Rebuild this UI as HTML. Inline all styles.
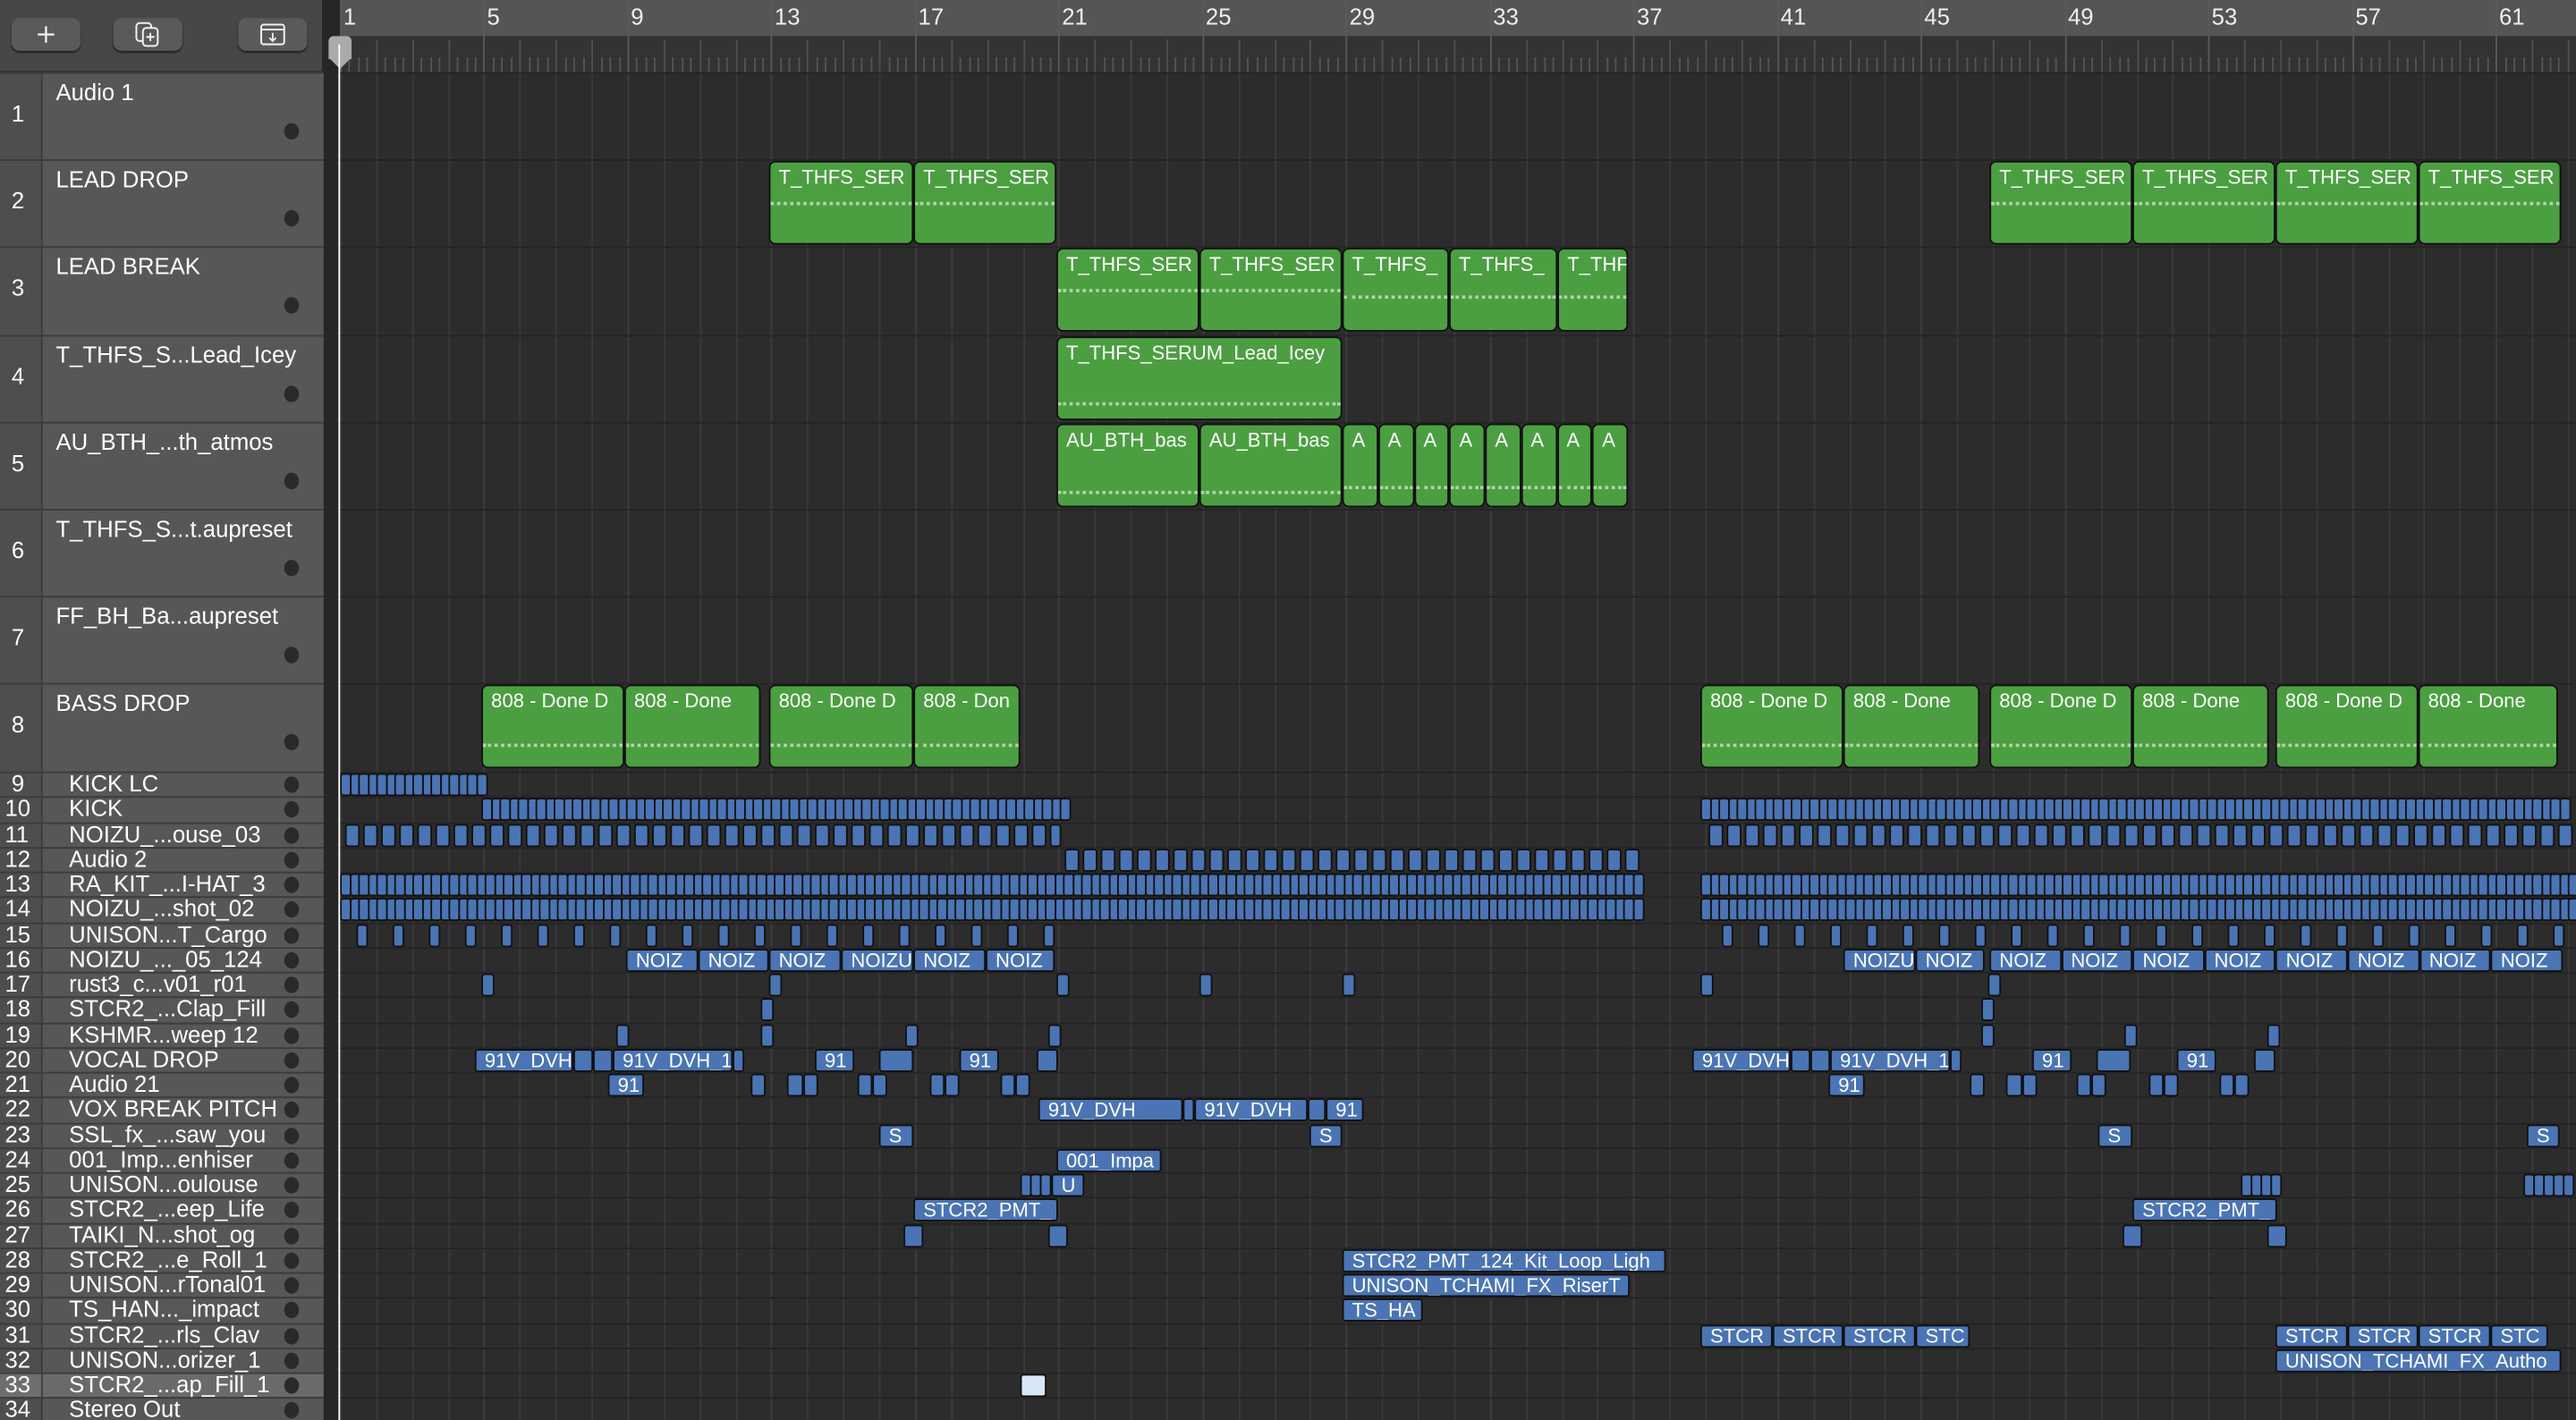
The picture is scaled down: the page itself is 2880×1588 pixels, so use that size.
<!DOCTYPE html>
<html><head><meta charset="utf-8">
<style>
html,body{margin:0;padding:0;background:#2c2c2c;overflow:hidden;width:2880px;height:1588px}
#w{position:absolute;left:0;top:0;width:1568px;height:865px;transform-origin:0 0;transform:scale(1.83673,1.83584);background:#2c2c2c;font-family:"Liberation Sans",sans-serif;color:#fff;overflow:hidden}
.a{position:absolute;box-sizing:border-box}
.g{background:#4b9f41;border:1px solid #111;border-radius:4px;overflow:hidden;font-size:12px;line-height:14px;padding:2px 0 0 5px;white-space:nowrap}
.b{background:#4a74b4;border:1px solid #111;border-radius:2px;overflow:hidden;font-size:12px;line-height:12px;padding-left:5px;white-space:nowrap}
.n{font-size:14px}
.dot{position:absolute;width:9px;height:10px;border-radius:50%;background:#2a2a2a}
.btn{position:absolute;top:11px;width:42px;height:20px;background:#5a5a5a;border-radius:5px;box-shadow:0 1px 1px #222}
</style></head><body><div id="w">
<div class="a" style="left:0;top:0;width:197px;height:44px;background:#474747;border-bottom:1px solid #333"></div>
<div class="btn" style="left:7px"><svg width="42" height="20"><path d="M21 5v10M16 10h10" stroke="#eee" stroke-width="1.3"/></svg></div>
<div class="btn" style="left:69px"><svg width="42" height="20"><rect x="14" y="3" width="9" height="11" rx="2" fill="none" stroke="#eee" stroke-width="1.1"/><rect x="18" y="6" width="9" height="11" rx="2" fill="#5a5a5a" stroke="#eee" stroke-width="1.1"/><path d="M22.5 9v5M20 11.5h5" stroke="#eee" stroke-width="1.1"/></svg></div>
<div class="btn" style="left:145px"><svg width="42" height="20"><rect x="14" y="4" width="14" height="12" rx="1.5" fill="none" stroke="#eee" stroke-width="1.1"/><path d="M14 7h14M21 9v5M19 12l2 2 2-2" stroke="#eee" stroke-width="1" fill="none"/></svg></div>
<div class="a" style="left:197px;top:0;width:1371px;height:22px;background:#555"></div>
<div class="a" style="left:197px;top:22px;width:1371px;height:22px;background:#333"></div>
<div class="a" style="left:196px;top:0;width:11px;height:865px;background:#262626"></div>
<div id="c"></div>
<div class="a" style="left:200px;top:22px;width:14px;height:14px;background:#aaa;border-radius:3px 3px 0 0"></div>
<div class="a" style="left:200px;top:35px;width:0;height:0;border-left:7px solid transparent;border-right:7px solid transparent;border-top:7px solid #aaa"></div>
<div class="a" style="left:206px;top:27px;width:1px;height:838px;background:#fff"></div>
</div>
<script>
var c=document.getElementById('c'),h='';
function X(b){return 207+(b-1)*21.87}
function A(s){h+=s}
for(var b=1;b<=63;b++){var x=X(b);
 A('<div class="a" style="left:'+x+'px;top:'+(b%4==1?0:24)+'px;width:1px;height:'+(b%4==1?865:20)+'px;background:'+(b%4==1?'#5a5a5a':'#505050')+'"></div>');
 for(var k=1;k<4;k++)A('<div class="a" style="left:'+(x+k*5.47)+'px;top:35px;width:1px;height:9px;background:#555"></div>');
 if(b%4==1)A('<div class="a" style="left:'+(x+2)+'px;top:2px;font-size:14px;color:#eee">'+b+'</div>');
 A('<div class="a" style="left:'+x+'px;top:44px;width:1px;height:821px;background:#3a3a3a"></div>');
}
var names=["Audio 1","LEAD DROP","LEAD BREAK","T_THFS_S...Lead_Icey","AU_BTH_...th_atmos","T_THFS_S...t.aupreset","FF_BH_Ba...aupreset","BASS DROP","KICK LC","KICK","NOIZU_...ouse_03","Audio 2","RA_KIT_...I-HAT_3","NOIZU_...shot_02","UNISON...T_Cargo","NOIZU_..._05_124","rust3_c...v01_r01","STCR2_...Clap_Fill","KSHMR...weep 12","VOCAL DROP","Audio 21","VOX BREAK PITCH","SSL_fx_...saw_you","001_Imp...enhiser","UNISON...oulouse","STCR2_...eep_Life","TAIKI_N...shot_og","STCR2_...e_Roll_1","UNISON...rTonal01","TS_HAN..._impact","STCR2_...rls_Clav","UNISON...orizer_1","STCR2_...ap_Fill_1","Stereo Out"];
function RY(r){return r<=8?44+(r-1)*53.2:470+(r-9)*15.25}
function RH(r){return r<=8?53.2:15.25}
for(var r=1;r<=34;r++){var y=RY(r),hh=RH(r),sel=r==33;
 A('<div class="a" style="left:0;top:'+y+'px;width:197px;height:'+hh+'px;background:'+(sel?'#6a6a6a':'#575757')+';border-top:1px solid #3c3c3c"></div>');
 A('<div class="a" style="left:0;top:'+y+'px;width:26px;height:'+hh+'px;background:'+(sel?'#6e6e6e':'#4e4e4e')+';border-top:1px solid #3c3c3c;border-right:1px solid #3c3c3c"></div>');
 A('<div class="a" style="left:207px;top:'+y+'px;width:1361px;height:1px;background:#242424"></div>');
 if(r<=8){A('<div class="a n" style="left:'+(r>9?3:7)+'px;top:'+(y+17)+'px">'+r+'</div><div class="a n" style="left:34px;top:'+(y+4)+'px">'+names[r-1]+'</div><div class="dot" style="left:173px;top:'+(y+31)+'px"></div>');}
 else{A('<div class="a n" style="left:'+(r>9?3:7)+'px;top:'+(y-1)+'px">'+r+'</div><div class="a n" style="left:42px;top:'+(y-1)+'px">'+names[r-1]+'</div><div class="dot" style="left:173px;top:'+(y+3)+'px"></div>');}
}
function G(r,x1,x2,t,dy){A('<div class="a g" style="left:'+x1+'px;top:'+(RY(r)+1)+'px;width:'+(x2-x1)+'px;height:51px">'+t+'<div style="position:absolute;left:0;right:0;top:'+(dy||25)+'px;border-top:2px dotted #cfe8c8;opacity:.75"></div></div>')}
var T="T_THFS_SER";
[[468,556],[556,643],[1211,1298],[1298,1385],[1385,1472],[1472,1559]].forEach(function(p){G(2,p[0],p[1],T,24)});
G(3,643,730,T,24);G(3,730,817,T,24);G(3,817,882,"T_THFS_",28);G(3,882,948,"T_THFS_",28);G(3,948,991,"T_THF",28);
G(4,643,817,"T_THFS_SERUM_Lead_Icey",39);
G(5,643,730,"AU_BTH_bas",40);G(5,730,817,"AU_BTH_bas",40);
for(var i=0;i<8;i++)G(5,817+i*21.75,817+(i+1)*21.75,"A",37);
[[293,380,"808 - Done D"],[380,463,"808 - Done"],[468,556,"808 - Done D"],[556,621,"808 - Don"],[1035,1122,"808 - Done D"],[1122,1205,"808 - Done"],[1211,1298,"808 - Done D"],[1298,1381,"808 - Done"],[1385,1472,"808 - Done D"],[1472,1557,"808 - Done"]].forEach(function(p){G(8,p[0],p[1],p[2],35)});
function B(r,x1,x2,t){A('<div class="a b" style="left:'+x1+'px;top:'+(RY(r)+1)+'px;width:'+(x2-x1)+'px;height:14px">'+(t||'')+'</div>')}
function D(r,x1,x2,s,w){for(var x=x1;x<x2;x+=s)B(r,x,Math.min(x+w,x2))}
D(9,207,292,5.5,5);D(10,293,646,5.5,5);D(10,1035,1561,5.5,5);
D(11,210,646,11,9);D(11,1040,1566,11,9);D(12,648,999,11,9);
D(13,207,999,5.5,5);D(13,1035,1566,5.5,5);D(14,207,999,5.5,5);D(14,1035,1566,5.5,5);
D(15,217,646,22,7);D(15,1048,1566,22,7);
[[381,425,"NOIZ"],[425,468,"NOIZ"],[468,512,"NOIZ"],[512,556,"NOIZU"],[556,600,"NOIZ"],[600,642,"NOIZ"],[1122,1166,"NOIZU"],[1166,1208,"NOIZ"]].forEach(function(p){B(16,p[0],p[1],p[2])});
for(i=0;i<8;i++)B(16,1211+i*43.6,1211+(i+1)*43.6,"NOIZ");
[293,468,643,730,817,1035,1210].forEach(function(x){B(17,x,x+8)});
[463,1206].forEach(function(x){B(18,x,x+8)});
[375,463,551,638,1206,1293,1380].forEach(function(x){B(19,x,x+8)});
[[289,349,"91V_DVH"],[349,361],[361,373],[373,446,"91V_DVH_1"],[446,453],[496,520,"91"],[535,556],[584,608,"91"],[631,644],[1030,1090,"91V_DVH"],[1090,1102],[1102,1114],[1114,1187,"91V_DVH_1"],[1187,1194],[1237,1261,"91"],[1276,1297],[1325,1349,"91"],[1372,1385]].forEach(function(p){B(20,p[0],p[1],p[2])});
[[370,392,"91"],[457,466],[479,489],[489,498],[522,531],[531,540],[566,575],[575,584],[609,618],[618,627],[1113,1135,"91"],[1199,1208],[1221,1231],[1231,1240],[1264,1273],[1273,1282],[1308,1317],[1317,1326],[1351,1360],[1360,1369]].forEach(function(p){B(21,p[0],p[1],p[2])});
[[632,720,"91V_DVH"],[720,727],[727,796,"91V_DVH"],[796,807],[807,830,"91"]].forEach(function(p){B(22,p[0],p[1],p[2])});
[[535,556],[797,817],[1277,1298],[1538,1558]].forEach(function(p){B(23,p[0],p[1],"S")});
B(24,643,707,"001_Impa");
B(25,621,626);B(25,627,632);B(25,633,640);B(25,640,660,"U");D(25,1364,1388,6,5);D(25,1536,1562,6,5);
B(26,556,644,"STCR2_PMT_");B(26,1298,1386,"STCR2_PMT_");
[550,638,1292,1380].forEach(function(x){B(27,x,x+12)});
B(28,817,1014,"STCR2_PMT_124_Kit_Loop_Ligh");B(29,817,992,"UNISON_TCHAMI_FX_RiserT");B(30,817,866,"TS_HA");
[[1035,1079,"STCR"],[1079,1122,"STCR"],[1122,1166,"STCR"],[1166,1199,"STC"],[1385,1429,"STCR"],[1429,1472,"STCR"],[1472,1516,"STCR"],[1516,1551,"STC"]].forEach(function(p){B(31,p[0],p[1],p[2])});
B(32,1385,1559,"UNISON_TCHAMI_FX_Autho");
A('<div class="a" style="left:621px;top:'+(RY(33)+1)+'px;width:16px;height:14px;background:#d8e6f7;border:1px solid #111;border-radius:2px"></div>');
c.innerHTML=h;
</script>
</body></html>
